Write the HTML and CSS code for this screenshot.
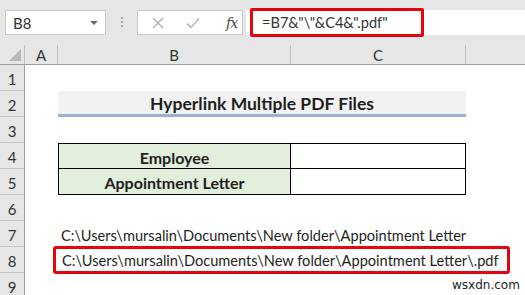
FILE: index.html
```html
<!DOCTYPE html>
<html>
<head>
<meta charset="utf-8">
<link rel="stylesheet" href="styles.css">
</head>
<body>
<div class="app">
  <div class="fbar">
    <div class="namebox"><span class="ref">B8</span><span class="caret"></span></div>
    <div class="grip"><i></i><i></i><i></i></div>
    <div class="btns">
      <svg class="ic" width="12" height="12" viewBox="0 0 12 12"><path d="M1 1L11 11M11 1L1 11" stroke="#b8b8b8" stroke-width="1.6" fill="none"/></svg>
      <svg class="ic" width="14" height="12" viewBox="0 0 14 12"><path d="M1 6.5L5 10.5L13 1.5" stroke="#bdbdbd" stroke-width="1.8" fill="none"/></svg>
      <span class="fx">fx</span>
    </div>
    <div class="finput"><div class="hl">=B7&amp;"\"&amp;C4&amp;".pdf"</div></div>
  </div>
  <div class="sheet">
    <div class="corner"><span class="tri"></span></div>
    <div class="ch">A</div>
    <div class="ch">B</div>
    <div class="ch">C</div>
    <div class="ch last"></div>

    <div class="rh">1</div><div class="row-fill"></div>
    <div class="rh">2</div><div class="cell a"></div><div class="title">Hyperlink Multiple PDF Files</div><div class="cell"></div>
    <div class="rh">3</div><div class="row-fill"></div>
    <div class="rh">4</div><div class="cell a"></div><div class="tb lbl top">Employee</div><div class="tb val top"></div><div class="cell"></div>
    <div class="rh">5</div><div class="cell a"></div><div class="tb lbl">Appointment Letter</div><div class="tb val"></div><div class="cell"></div>
    <div class="rh">6</div><div class="row-fill"></div>
    <div class="rh">7</div><div class="cell a"></div><div class="path">C:\Users\mursalin\Documents\New folder\Appointment Letter</div>
    <div class="rh">8</div><div class="r8"><div class="redbox">C:\Users\mursalin\Documents\New folder\Appointment Letter\.pdf</div></div>
    <div class="rh">9</div><div class="row-fill"></div>
  </div>
  <div class="wm">wsxdn.com</div>
</div>
</body>
</html>
```
FILE: styles.css
```css
* { box-sizing: border-box; }
html, body { margin: 0; padding: 0; }
body { width: 525px; height: 295px; overflow: hidden; background: #fff; font-family: Lato, "Liberation Sans", sans-serif; color: #1e1e1e; }
.app { position: relative; width: 525px; height: 295px; }

.fbar { height: 45px; background: #e6e6e6; display: flex; align-items: flex-start; padding-top: 10px; }
.namebox { margin-left: 5px; width: 101px; height: 25px; background: #fff; border: 1px solid #c8c8c8; display: flex; align-items: center; padding-left: 7px; position: relative; }
.ref { font-size: 15px; color: #333; }
.caret { position: absolute; right: 7px; top: 10px; width: 0; height: 0; border-left: 4px solid transparent; border-right: 4px solid transparent; border-top: 4px solid #6a6a6a; }
.grip { width: 31px; display: flex; flex-direction: column; align-items: center; gap: 2px; padding-top: 7px; }
.grip i { width: 2px; height: 2px; background: #a8a8a8; display: block; }
.btns { width: 106px; height: 25px; background: #fff; border: 1px solid #c8c8c8; display: flex; align-items: center; padding-left: 14px; }
.btns .ic:nth-child(1) { margin-right: 22px; }
.btns .ic:nth-child(2) { margin-right: 26px; }
.fx { font-family: "DejaVu Serif", "Liberation Serif", serif; font-style: italic; font-size: 14px; color: #4a4a4a; letter-spacing: -1px; }
.finput { margin-left: 3px; flex: 1; height: 25px; background: #fff; display: flex; align-items: center; padding-left: 4px; }
.hl { width: 174px; height: 29px; border: 3px solid #e4060c; border-radius: 2px; display: flex; align-items: center; padding-left: 9px; font-size: 14.6px; color: #333; }

.sheet { display: grid; grid-template-columns: 25px 33px 233px 175px 1fr; grid-template-rows: 20px repeat(9, 26px); }
.corner { background: #e6e6e6; border-right: 1px solid #c0c0c0; border-bottom: 1px solid #9e9e9e; position: relative; }
.tri { position: absolute; right: 3px; bottom: 3px; width: 0; height: 0; border-left: 12px solid transparent; border-bottom: 12px solid #b9b9b9; }
.ch { background: #e6e6e6; border-right: 1px solid #c0c0c0; border-bottom: 1px solid #9e9e9e; font-size: 15px; color: #333; display: flex; align-items: center; justify-content: center; }
.ch.last { border-right: none; }
.rh { grid-column: 1; background: #e6e6e6; border-right: 1px solid #9e9e9e; border-bottom: 1px solid #c6c6c6; font-size: 15px; color: #333; display: flex; align-items: center; justify-content: center; padding-top: 2px; }
.row-fill { grid-column: 2 / 6; }
.title { grid-column: 3 / 5; background: #f2f2f2; border-bottom: 3px solid #9db0d8; font-weight: 700; font-size: 17.5px; color: #1e1e1e; display: flex; align-items: center; justify-content: center; padding-top: 2px; }
.tb { border: 1px solid #000; border-top: none; display: flex; align-items: center; justify-content: center; font-weight: 700; font-size: 16px; padding-top: 2px; }
.tb.top { border-top: 1px solid #000; }
.lbl { background: #e2efda; }
.val { border-left: none; background: #fff; }
.path { grid-column: 3 / 6; display: flex; align-items: center; padding-left: 3px; padding-top: 3px; font-size: 14.6px; white-space: nowrap; }
.r8 { grid-column: 2 / 6; display: flex; align-items: center; }
.redbox { margin-left: 28px; width: 457px; height: 28px; flex: none; border: 3px solid #e4060c; border-radius: 3px; display: flex; align-items: center; padding-left: 6px; padding-top: 1px; font-size: 14.6px; white-space: nowrap; }
.wm { position: absolute; left: 452px; top: 278px; font-family: "DejaVu Sans", sans-serif; font-size: 12px; color: #222; }
```
